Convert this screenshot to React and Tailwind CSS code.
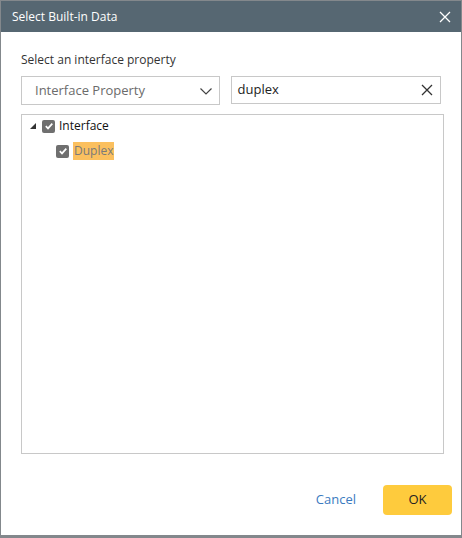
import React from "react";

export default function App() {
  return (
    <div
      className="w-[462px] h-[538px] bg-[#83888c] pl-px pt-px pr-px overflow-hidden"
      style={{ fontFamily: '"Open Sans", "Noto Sans", sans-serif' }}
    >
      <div className="w-[460px] h-[534px] bg-white flex flex-col">
        <div className="h-[31px] bg-[#566772] flex items-center justify-between pl-[11px] pr-[8px]">
          <span className="text-white text-[12px] leading-none">Select Built-in Data</span>
          <svg width="14" height="14" viewBox="0 0 14 14" className="mr-[1px]">
            <path d="M2 2 L12 12 M12 2 L2 12" stroke="#ffffff" strokeWidth="1.3" />
          </svg>
        </div>
        <div className="flex flex-col px-[20px] pt-[20px]">
          <div className="text-[12px] text-[#333] leading-[16px]">Select an interface property</div>
          <div className="flex gap-[11px] mt-[8px]">
            <div className="w-[200px] h-[29px] border border-[#c8c8c8] flex items-center justify-between pl-[13px] pr-[6px]">
              <span className="text-[13px] text-[#6b6b6b]">Interface Property</span>
              <svg width="14" height="14" viewBox="0 0 14 14">
                <path d="M1.5 4.5 L7 10 L12.5 4.5" stroke="#444" strokeWidth="1.2" fill="none" />
              </svg>
            </div>
            <div className="w-[212px] h-[28px] border border-[#c8c8c8] flex items-center justify-between pl-[6px] pr-[7px]">
              <span className="text-[13px] text-[#222]">duplex</span>
              <svg width="12" height="12" viewBox="0 0 12 12">
                <path d="M1 1 L11 11 M11 1 L1 11" stroke="#333" strokeWidth="1.3" />
              </svg>
            </div>
          </div>
          <div className="mt-[9px] w-[423px] h-[340px] border border-[#c8c8c8] pt-[3px] pl-[5px]">
            <div className="flex items-center h-[16px]">
              <svg width="8" height="8" viewBox="0 0 8 8" className="ml-[2px]">
                <path d="M7 1 L7 7 L1 7 Z" fill="#333" />
              </svg>
              <span className="ml-[5px] w-[13px] h-[13px] bg-[#6f6f6f] rounded-[2px] flex items-center justify-center">
                <svg width="10" height="10" viewBox="0 0 10 10">
                  <path d="M1.8 5.2 L4 7.4 L8.3 2.6" stroke="#fff" strokeWidth="1.7" fill="none" />
                </svg>
              </span>
              <span className="ml-[4px] text-[12px] text-[#111] leading-none">Interface</span>
            </div>
            <div className="flex items-center h-[18px] mt-[8px] pl-[29px]">
              <span className="w-[13px] h-[13px] bg-[#6f6f6f] rounded-[2px] flex items-center justify-center">
                <svg width="10" height="10" viewBox="0 0 10 10">
                  <path d="M1.8 5.2 L4 7.4 L8.3 2.6" stroke="#fff" strokeWidth="1.7" fill="none" />
                </svg>
              </span>
              <span className="ml-[4px] h-[18px] px-[1px] bg-[#fbc05f] text-[12px] text-[#7a7a7a] leading-[18px]">Duplex</span>
            </div>
          </div>
        </div>
        <div className="flex justify-end items-center mt-[31px] pr-[9px]">
          <span className="text-[13px] text-[#3b7bbf] mr-[27px]">Cancel</span>
          <div className="w-[69px] h-[30px] bg-[#fecb3d] rounded-[4px] flex items-center justify-center text-[13px] text-[#222]">OK</div>
        </div>
      </div>
    </div>
  );
}
